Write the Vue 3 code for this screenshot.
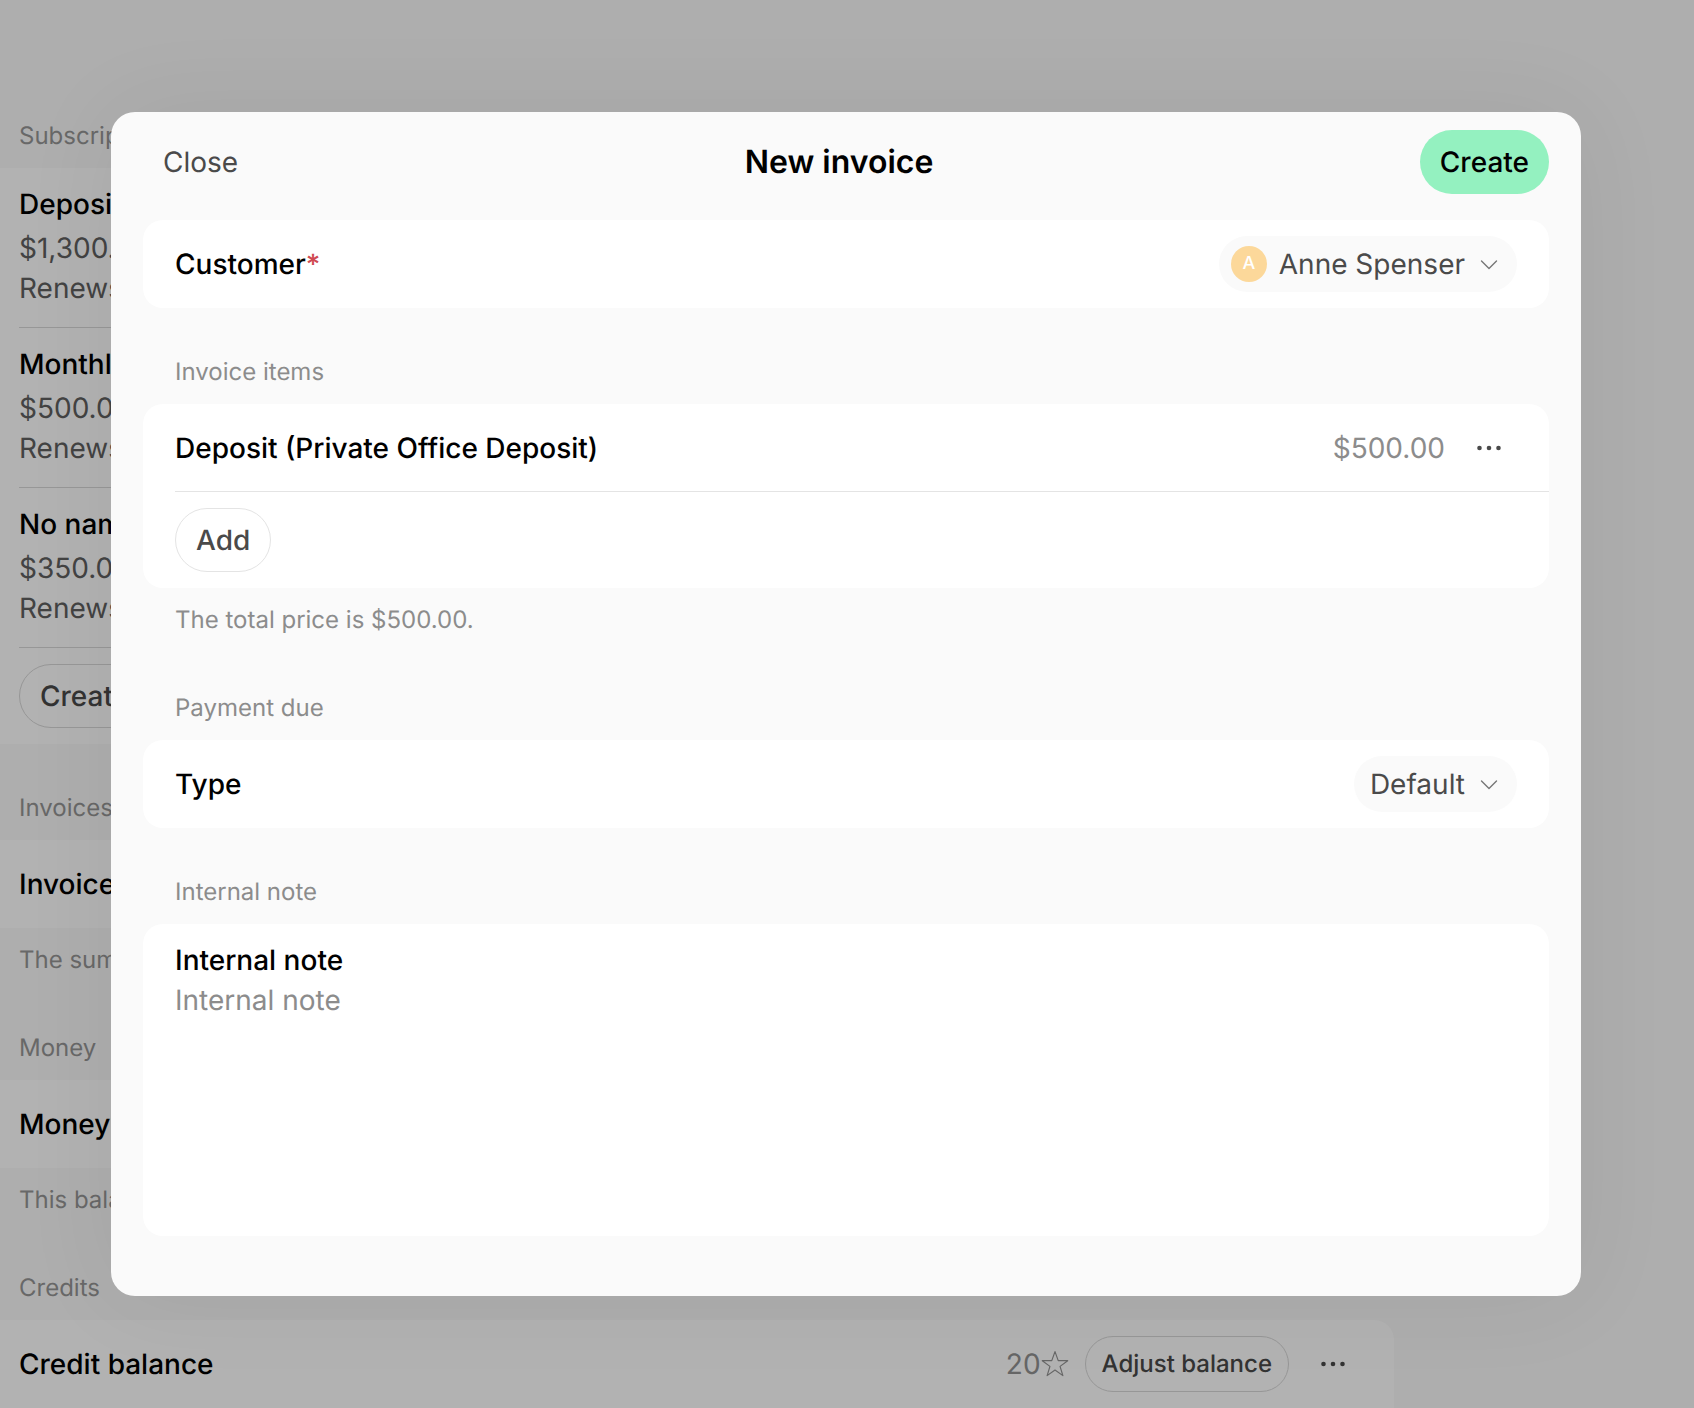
<script setup>
const subscriptions = [
  { name: 'Deposit', price: '$1,300.00', renew: 'Renews on the 1st of each month' },
  { name: 'Monthly rent', price: '$500.00', renew: 'Renews on the 1st of each month' },
  { name: 'No name', price: '$350.00', renew: 'Renews on the 1st of each month' }
]
</script>

<template>
  <div class="screen">
    <main class="page">
      <h2 class="label">Subscriptions</h2>
      <section class="card">
        <div v-for="s in subscriptions" :key="s.name" class="sub">
          <div class="strong">{{ s.name }}</div>
          <div class="muted price-line">{{ s.price }}</div>
          <div class="muted renew-line">{{ s.renew }}</div>
        </div>
        <div class="sub-action"><button class="outline big">Create subscription</button></div>
      </section>

      <h2 class="label spaced">Invoices</h2>
      <section class="card row"><span class="strong">Invoice settings</span></section>
      <p class="note">The sum of all open invoices.</p>

      <h2 class="label wide">Money</h2>
      <section class="card row"><span class="strong">Money balance</span></section>
      <p class="note">This balance is applied to the next invoice.</p>

      <h2 class="label wide">Credits</h2>
      <section class="card row credit">
        <span class="strong">Credit balance</span>
        <span class="credit-side">
          <span class="credit-count">20<svg class="star" viewBox="0 0 26 26" fill="none" stroke="currentColor" stroke-width="1.100" stroke-linejoin="round"><path d="M13 1.500l3 8.400h8.800l-7.100 5.300 2.600 8.600L13 18.600l-7.300 5.200 2.600-8.600-7.100-5.300H10z"/></svg></span>
          <button class="outline small">Adjust balance</button>
          <svg class="dots" viewBox="0 0 24 6" fill="currentColor"><circle cx="2.500" cy="3" r="2.300"/><circle cx="12" cy="3" r="2.300"/><circle cx="21.500" cy="3" r="2.300"/></svg>
        </span>
      </section>
    </main>

    <div class="overlay"></div>

    <div class="modal">
      <header class="modal-head">
        <button class="close">Close</button>
        <h1 class="title">New invoice</h1>
        <button class="create">Create</button>
      </header>

      <section class="m-card m-row">
        <span class="strong">Customer<span class="req">*</span></span>
        <span class="pill pill-avatar">
          <span class="avatar">A</span>
          <span class="pill-text">Anne Spenser</span>
          <svg class="chev" viewBox="0 0 24 24" fill="none" stroke="currentColor" stroke-width="1.400" stroke-linecap="round" stroke-linejoin="round"><path d="M4.500 9l7.500 7.500L19.500 9"/></svg>
        </span>
      </section>

      <h2 class="m-label">Invoice items</h2>
      <section class="m-card">
        <div class="item">
          <span class="strong">Deposit (Private Office Deposit)</span>
          <span class="item-side">
            <span class="price">$500.00</span>
            <svg class="dots" viewBox="0 0 24 6" fill="currentColor"><circle cx="2.500" cy="3" r="2.300"/><circle cx="12" cy="3" r="2.300"/><circle cx="21.500" cy="3" r="2.300"/></svg>
          </span>
        </div>
        <div class="add-wrap"><button class="add">Add</button></div>
      </section>
      <p class="m-note">The total price is $500.00.</p>

      <h2 class="m-label m-wide">Payment due</h2>
      <section class="m-card m-row">
        <span class="strong">Type</span>
        <span class="pill">
          <span class="pill-text">Default</span>
          <svg class="chev" viewBox="0 0 24 24" fill="none" stroke="currentColor" stroke-width="1.400" stroke-linecap="round" stroke-linejoin="round"><path d="M4.500 9l7.500 7.500L19.500 9"/></svg>
        </span>
      </section>

      <h2 class="m-label">Internal note</h2>
      <section class="m-card textarea">
        <div class="strong">Internal note</div>
        <div class="placeholder">Internal note</div>
      </section>
    </div>
  </div>
</template>

<style>
html, body { margin: 0; padding: 0; }
</style>

<style scoped>
* { box-sizing: border-box; }
.screen {
  position: relative;
  width: 1694px;
  height: 1408px;
  overflow: hidden;
  background: #fafafa;
  font-family: Inter, "Liberation Sans", sans-serif;
  font-size: 28px;
  line-height: 40px;
  color: #000;
  text-rendering: geometricPrecision;
}
button { font: inherit; margin: 0; cursor: pointer; text-rendering: geometricPrecision; }
h1, h2, p { margin: 0; font: inherit; }

/* background page */
.page { width: 1394px; padding-top: 120px; }
.label {
  padding-left: 19px;
  margin-bottom: 16px;
  font-size: 24px;
  line-height: 32px;
  color: #969696;
}
.label.spaced { margin-top: 48px; }
.label.wide { margin-top: 56px; }
.card { background: #fff; border-radius: 0 20px 20px 0; }
.strong { font-weight: 500; color: #000; }
.sub { margin-left: 19px; height: 160px; padding-top: 15px; border-bottom: 1px solid #d8d8d8; }
.sub .strong { line-height: 42px; }
.price-line { line-height: 42px; margin-top: 2px; }
.renew-line { line-height: 38px; }
.muted { color: #606060; }
.sub-action { padding: 16px 19px; }
.outline {
  background: transparent;
  border: 1px solid #d8d8d8;
  border-radius: 32px;
  color: #4a4a4a;
  font-weight: 500;
}
.outline.big { height: 64px; padding: 0 20px; }
.outline.small { height: 56px; padding: 0 16px; font-size: 24px; }
.row {
  display: flex;
  align-items: center;
  justify-content: space-between;
  height: 88px;
  padding: 0 49px 0 19px;
}
.note {
  margin-top: 16px;
  padding-left: 19px;
  font-size: 24px;
  line-height: 32px;
  color: #969696;
}
.credit { border-radius: 0 20px 0 0; }
.credit-side { display: flex; align-items: center; color: #4a4a4a; }
.credit-count { display: flex; align-items: center; color: #939393; margin-right: 16px; }
.star { width: 28px; height: 28px; }
.dots { width: 24px; height: 6px; display: block; color: #4a4a4a; margin-left: 32px; }
.overlay { position: absolute; inset: 0; background: rgba(0, 0, 0, 0.3); }

/* modal */
.modal {
  position: absolute;
  left: 111px;
  top: 112px;
  width: 1470px;
  height: 1184px;
  padding: 18px 32px 0;
  background: #fafafa;
  border-radius: 24px;
  box-shadow: 0 0 100px rgba(0, 0, 0, 0.06);
}
.modal-head {
  display: flex;
  align-items: center;
  justify-content: space-between;
  height: 64px;
  margin-bottom: 26px;
}
.close {
  height: 64px;
  padding: 0 20px;
  border: 0;
  background: transparent;
  color: #4a4a4a;
  font-weight: 400;
}
.title { font-size: 32px; font-weight: 600; color: #000; }
.create {
  height: 64px;
  padding: 0 20px;
  border: 0;
  border-radius: 32px;
  background: #94f1c0;
  color: #000;
  font-weight: 500;
}
.m-card { background: #fff; border-radius: 20px; }
.m-row {
  display: flex;
  align-items: center;
  justify-content: space-between;
  height: 88px;
  padding: 0 32px;
}
.req { color: #d04a52; }
.pill {
  display: flex;
  align-items: center;
  height: 56px;
  padding: 0 16px;
  border-radius: 28px;
  background: #fafafa;
  color: #4a4a4a;
}
.pill-avatar { padding-left: 12px; }
.avatar {
  display: flex;
  align-items: center;
  justify-content: center;
  width: 36px;
  height: 36px;
  margin-right: 12px;
  border-radius: 50%;
  background: #fcd89a;
  color: #fff;
  font-size: 18px;
  font-weight: 500;
}
.chev { width: 24px; height: 24px; margin-left: 12px; color: #767676; }
.m-label {
  margin-top: 48px;
  margin-bottom: 16px;
  padding-left: 32px;
  font-size: 24px;
  line-height: 32px;
  color: #8c8c8c;
}
.m-wide { margin-top: 56px; }
.item {
  display: flex;
  align-items: center;
  justify-content: space-between;
  height: 88px;
  margin-left: 32px;
  padding-right: 48px;
  border-bottom: 1px solid #e4e4e4;
}
.item-side { display: flex; align-items: center; }
.price { color: #8c8c8c; }
.add-wrap { padding: 16px 32px; }
.add {
  display: block;
  height: 64px;
  padding: 0 20px;
  border: 1px solid #e4e4e4;
  border-radius: 32px;
  background: #fff;
  color: #4a4a4a;
  font-weight: 500;
}
.m-note {
  margin-top: 16px;
  padding-left: 32px;
  font-size: 24px;
  line-height: 32px;
  color: #8c8c8c;
}
.textarea { height: 312px; padding: 16px 32px; }
.placeholder { color: #8c8c8c; }
</style>
